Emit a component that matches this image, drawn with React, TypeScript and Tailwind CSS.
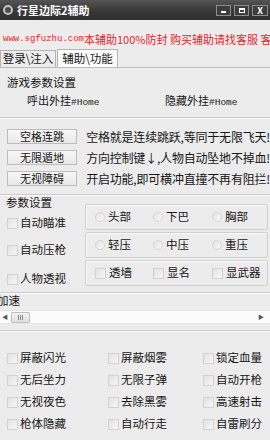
import React from "react";

const Check = () => (
  <span className="inline-block w-[11px] h-[11px] shrink-0 border border-[#d2d2d2] bg-gradient-to-br from-[#e2e2e2] to-[#f7f7f7]" />
);

const Radio = () => (
  <span className="inline-block w-[10px] h-[10px] shrink-0 rounded-full border border-[#d4d4d4] bg-gradient-to-br from-[#e4e4e4] to-[#f8f8f8]" />
);

const Etched = () => (
  <div className="flex flex-col">
    <div className="h-px bg-[#cbcbcb]" />
    <div className="h-px bg-[#fafafa]" />
  </div>
);

const BoxRow = ({ items, radio }: { items: string[]; radio?: boolean }) => (
  <div className="h-[26px] rounded-[2px] border border-[#cfcfcf] shadow-[inset_1px_1px_0_#fbfbfb] flex items-center pl-[9px]">
    {items.map((t, i) => (
      <div key={t} className={`flex items-center gap-[3px] ${i === 0 ? "w-[58px]" : i === 1 ? "w-[59px]" : ""}`}>
        {radio ? <Radio /> : <Check />}
        <span className="text-[11.5px] leading-none">{t}</span>
      </div>
    ))}
  </div>
);

const LeftCheck = ({ label, mt }: { label: string; mt: string }) => (
  <div className={`flex items-center gap-[2px] pl-[7px] h-[14px] ${mt}`}>
    <Check />
    <span className="text-[11.5px] leading-none">{label}</span>
  </div>
);

const grid = [
  ["屏蔽闪光", "屏蔽烟雾", "锁定血量"],
  ["无后坐力", "无限子弹", "自动开枪"],
  ["无视夜色", "去除黑雾", "高速射击"],
  ["枪体隐藏", "自动行走", "自雷刷分"],
];

export default function App() {
  return (
    <div className="w-[270px] h-[440px] overflow-hidden bg-[#ececec] text-[#161616] font-['Noto_Sans_CJK_SC','Noto_Sans',sans-serif] select-none">
      {/* title bar */}
      <div className="h-[20px] flex items-center bg-gradient-to-b from-[#555555] via-[#3a3a3a] to-[#2e2e2e]">
        <div className="ml-[3px] w-[10px] h-[10px] rounded-full border-[2px] border-[#c4c4c4] bg-[#4a4a4a]" />
        <span className="ml-[4px] text-white text-[11px] font-bold leading-none">行星边际2辅助</span>
        <div className="ml-auto mr-[2px] flex gap-[3px]">
          <div className="w-[15px] h-[11px] border border-[#8e8e8e] bg-[#3d3d3d] flex items-end justify-center pb-[2px]">
            <div className="w-[5px] h-[2px] bg-white" />
          </div>
          <div className="w-[15px] h-[11px] border border-[#8e8e8e] bg-[#3d3d3d] flex items-center justify-center">
            <div className="w-[6px] h-[5px] border border-white border-t-2" />
          </div>
          <div className="w-[16px] h-[11px] border border-[#8e8e8e] bg-[#3d3d3d] flex items-center justify-center text-white text-[9px] font-bold leading-none">
            X
          </div>
        </div>
      </div>

      {/* red marquee */}
      <div className="mt-[12px] h-[14px] flex items-center whitespace-nowrap overflow-hidden pl-[3px] text-[#e5262c]">
        <span className="font-['Liberation_Mono',monospace] text-[9px] leading-none">www.sgfuzhu.com</span>
        <span className="text-[11px] leading-none">本辅助100%防封 购买辅助请找客服 客服</span>
      </div>

      {/* tabs */}
      <div className="mt-[3px] h-[18px] flex items-end">
        <div className="h-[17px] w-[56px] border border-b-0 border-[#b4b4b4] bg-[#ededed] flex items-center justify-center text-[11.5px] leading-none">
          登录\注入
        </div>
        <div className="ml-px h-[18px] w-[61px] border border-b-0 border-[#b4b4b4] bg-[#fbfbfb] flex items-center justify-center text-[11.5px] leading-none">
          辅助\功能
        </div>
      </div>

      {/* panel */}
      <div className="border-t border-[#bdbdbd]">
        <div className="mt-[9px] pl-[7px] h-[12px] flex items-center text-[11.5px] leading-none">游戏参数设置</div>
        <div className="mt-[5px] h-[14px] flex items-center text-[11px] leading-none">
          <span className="pl-[27px] w-[165px]">
            呼出外挂<span className="font-['Liberation_Mono',monospace] text-[9.5px]">#Home</span>
          </span>
          <span>
            隐藏外挂<span className="font-['Liberation_Mono',monospace] text-[9.5px]">#Home</span>
          </span>
        </div>
        <div className="mt-[9px]">
          <Etched />
        </div>

        {/* action buttons */}
        <div className="mt-[10px] flex flex-col gap-[6px]">
          {[
            ["空格连跳", "空格就是连续跳跃,等同于无限飞天!"],
            ["无限遁地", "方向控制键↓,人物自动坠地不掉血!"],
            ["无视障碍", "开启功能,即可横冲直撞不再有阻拦!"],
          ].map(([b, d]) => (
            <div key={b} className="h-[15px] flex items-center">
              <div className="ml-[7px] w-[76px] h-[15px] border border-[#bdbdbd] bg-gradient-to-b from-[#f7f7f7] to-[#e9e9e9] flex items-center justify-center text-[11px] leading-none">
                {b}
              </div>
              <span className="ml-[9px] text-[12px] leading-none whitespace-nowrap tracking-[-0.2px]">{d}</span>
            </div>
          ))}
        </div>

        <div className="mt-[8px]">
          <Etched />
        </div>

        {/* 参数设置 */}
        <div className="flex">
          <div className="w-[85px] flex flex-col">
            <div className="mt-[1px] pl-[6px] h-[12px] flex items-center text-[11.5px] leading-none">参数设置</div>
            <LeftCheck label="自动瞄准" mt="mt-[7px]" />
            <LeftCheck label="自动压枪" mt="mt-[13px]" />
            <LeftCheck label="人物透视" mt="mt-[15px]" />
          </div>
          <div className="mt-[8px] mr-[2px] flex-1 flex flex-col gap-[2px]">
            <BoxRow radio items={["头部", "下巴", "胸部"]} />
            <BoxRow radio items={["轻压", "中压", "重压"]} />
            <BoxRow items={["透墙", "显名", "显武器"]} />
          </div>
        </div>

        <div className="mt-[6px]">
          <Etched />
        </div>

        {/* 加速 */}
        <div className="h-[13px] -ml-[3px] flex items-center text-[11.5px] leading-none">加速</div>
        <div className="mt-[3px] h-[14px] flex items-center bg-[#fbfbfb] border-y border-[#e6e6e6]">
          <span className="ml-[2px] w-[6px] text-[6px] text-[#555] leading-none">◀</span>
          <div className="ml-[3px] w-[19px] h-[11px] border border-[#bfbfbf] rounded-[1px] bg-gradient-to-b from-[#f2f2f2] to-[#dedede] flex items-center justify-center gap-[1px]">
            <div className="w-px h-[5px] bg-[#8a8a8a]" />
            <div className="w-px h-[5px] bg-[#8a8a8a]" />
            <div className="w-px h-[5px] bg-[#8a8a8a]" />
          </div>
          <span className="ml-auto mr-[6px] text-[6px] text-[#555] leading-none">▶</span>
        </div>
        <div className="mt-[6px]">
          <Etched />
        </div>

        {/* feature grid */}
        <div className="mt-[15px] pl-[7px] grid grid-cols-[101px_95px_1fr]">
          {grid.flat().map((t) => (
            <div key={t} className="h-[22px] flex items-center gap-[2px]">
              <Check />
              <span className="text-[11.5px] leading-none">{t}</span>
            </div>
          ))}
        </div>
      </div>
    </div>
  );
}
